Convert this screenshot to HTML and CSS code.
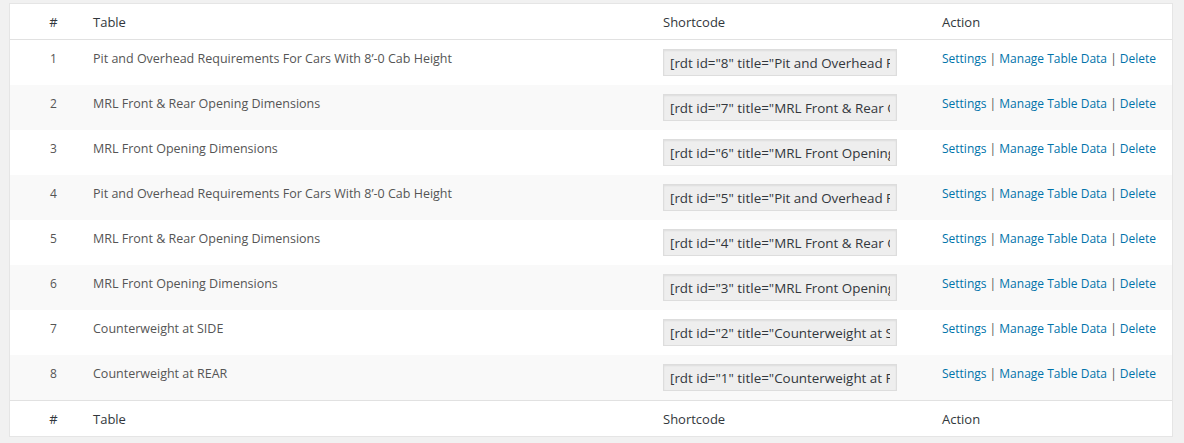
FILE: index.html
```html
<!DOCTYPE html>
<html>
<head>
<meta charset="utf-8">
<link rel="stylesheet" href="styles.css">
</head>
<body>
<table class="list-table">
  <colgroup>
    <col class="col-num">
    <col class="col-table">
    <col class="col-code">
    <col class="col-action">
  </colgroup>
  <thead>
    <tr>
      <th class="num">#</th>
      <th>Table</th>
      <th>Shortcode</th>
      <th>Action</th>
    </tr>
  </thead>
  <tbody>
    <tr>
      <td class="num">1</td>
      <td class="title">Pit and Overhead Requirements For Cars With 8’-0 Cab Height</td>
      <td><input class="code" type="text" readonly value='[rdt id="8" title="Pit and Overhead Requirements For Cars With 8’-0 Cab Height"]'></td>
      <td class="actions"><a href="#">Settings</a> | <a href="#">Manage Table Data</a> | <a href="#">Delete</a></td>
    </tr>
    <tr class="alt">
      <td class="num">2</td>
      <td class="title">MRL Front &amp; Rear Opening Dimensions</td>
      <td><input class="code" type="text" readonly value='[rdt id="7" title="MRL Front &amp; Rear Opening Dimensions"]'></td>
      <td class="actions"><a href="#">Settings</a> | <a href="#">Manage Table Data</a> | <a href="#">Delete</a></td>
    </tr>
    <tr>
      <td class="num">3</td>
      <td class="title">MRL Front Opening Dimensions</td>
      <td><input class="code" type="text" readonly value='[rdt id="6" title="MRL Front Opening Dimensions"]'></td>
      <td class="actions"><a href="#">Settings</a> | <a href="#">Manage Table Data</a> | <a href="#">Delete</a></td>
    </tr>
    <tr class="alt">
      <td class="num">4</td>
      <td class="title">Pit and Overhead Requirements For Cars With 8’-0 Cab Height</td>
      <td><input class="code" type="text" readonly value='[rdt id="5" title="Pit and Overhead Requirements For Cars With 8’-0 Cab Height"]'></td>
      <td class="actions"><a href="#">Settings</a> | <a href="#">Manage Table Data</a> | <a href="#">Delete</a></td>
    </tr>
    <tr>
      <td class="num">5</td>
      <td class="title">MRL Front &amp; Rear Opening Dimensions</td>
      <td><input class="code" type="text" readonly value='[rdt id="4" title="MRL Front &amp; Rear Opening Dimensions"]'></td>
      <td class="actions"><a href="#">Settings</a> | <a href="#">Manage Table Data</a> | <a href="#">Delete</a></td>
    </tr>
    <tr class="alt">
      <td class="num">6</td>
      <td class="title">MRL Front Opening Dimensions</td>
      <td><input class="code" type="text" readonly value='[rdt id="3" title="MRL Front Opening Dimensions"]'></td>
      <td class="actions"><a href="#">Settings</a> | <a href="#">Manage Table Data</a> | <a href="#">Delete</a></td>
    </tr>
    <tr>
      <td class="num">7</td>
      <td class="title">Counterweight at SIDE</td>
      <td><input class="code" type="text" readonly value='[rdt id="2" title="Counterweight at SIDE"]'></td>
      <td class="actions"><a href="#">Settings</a> | <a href="#">Manage Table Data</a> | <a href="#">Delete</a></td>
    </tr>
    <tr class="alt">
      <td class="num">8</td>
      <td class="title">Counterweight at REAR</td>
      <td><input class="code" type="text" readonly value='[rdt id="1" title="Counterweight at REAR"]'></td>
      <td class="actions"><a href="#">Settings</a> | <a href="#">Manage Table Data</a> | <a href="#">Delete</a></td>
    </tr>
  </tbody>
  <tfoot>
    <tr>
      <th class="num">#</th>
      <th>Table</th>
      <th>Shortcode</th>
      <th>Action</th>
    </tr>
  </tfoot>
</table>
</body>
</html>
```

FILE: styles.css
```css
html, body {
  background: #f1f1f1;
}
body {
  margin: 3px 11px 6px 9px;
  font-family: "Open Sans", "Noto Sans", sans-serif;
  font-size: 12px;
  color: #555;
}
.list-table {
  width: 100%;
  table-layout: fixed;
  border-collapse: separate;
  border-spacing: 0;
  background: #fff;
  border: 1px solid #e5e5e5;
  box-shadow: 0 1px 1px rgba(0,0,0,.04);
}
.col-num { width: 73px; }
.col-table { width: 570px; }
.col-code { width: 279px; }
.col-action { width: 240px; }

.list-table th {
  text-align: left;
  font-weight: 400;
  font-size: 13px;
  line-height: 19px;
  color: #32373c;
  padding: 9px 10px 7px;
  height: 19px;
}
.list-table thead th {
  border-bottom: 1px solid #e1e1e1;
}
.list-table tfoot th {
  border-top: 1px solid #e1e1e1;
}
.list-table td {
  vertical-align: top;
  padding: 8px 10px;
  line-height: 22px;
  font-size: 12px;
  color: #555;
}
.list-table td.title {
  font-size: 12.5px;
}
.list-table .num {
  text-align: center;
  padding-left: 24px;
}
.list-table tr.alt td {
  background: #f9f9f9;
}
.code {
  display: block;
  box-sizing: border-box;
  width: 234px;
  height: 27px;
  margin: 1px 0;
  padding: 0 6px;
  border: 1px solid #ddd;
  border-radius: 0;
  background: #eee;
  font-family: "Open Sans", "Noto Sans", sans-serif;
  font-size: 13.4px;
  color: #32373c;
  box-shadow: inset 0 1px 2px rgba(0,0,0,.07);
  outline: none;
}
.actions a {
  color: #0073aa;
  text-decoration: none;
}
.actions {
  white-space: nowrap;
}
```
